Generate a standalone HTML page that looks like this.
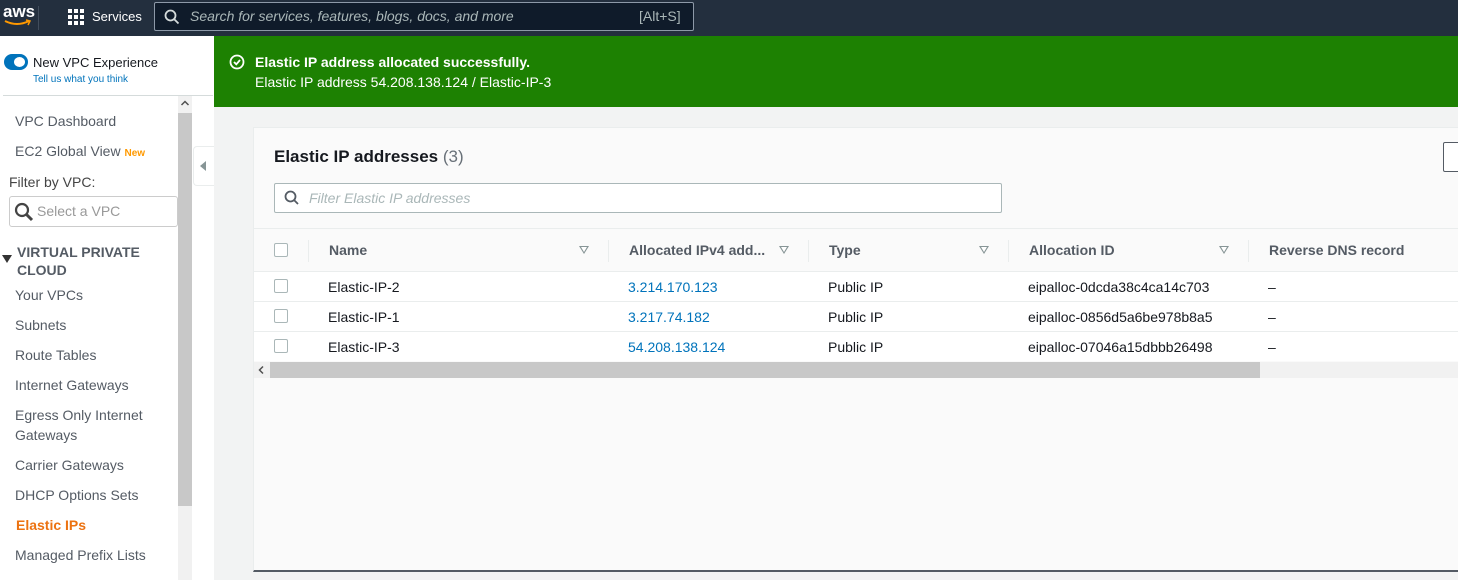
<!DOCTYPE html>
<html><head><style>
*{margin:0;padding:0;box-sizing:border-box}
body{width:1458px;height:580px;overflow:hidden;position:relative;background:#f2f3f3;font-family:"Liberation Sans",sans-serif;font-size:14px;color:#16191f}
.a{position:absolute;white-space:nowrap}
.nav{color:#545b64;font-size:14px}
.th{font-weight:bold;color:#545b64;font-size:14px}
.tri{position:absolute;width:0;height:0;border-left:5px solid transparent;border-right:5px solid transparent;border-top:8px solid #879596}
.tri:after{content:"";position:absolute;left:-3px;top:-7px;border-left:3px solid transparent;border-right:3px solid transparent;border-top:5px solid #fff}
.cb{position:absolute;width:14px;height:14px;border:1px solid #aab7b8;border-radius:2px;background:#fff}
.lnk{color:#0073bb}
</style></head><body>
<div class="a" style="left:0;top:0;width:1458px;height:36px;background:#232f3e"></div>
<div class="a" style="left:3px;top:2px;color:#fff;font-size:17px;font-weight:bold">aws</div>
<svg class="a" style="left:3px;top:19px" width="30" height="8"><path d="M2 2 Q14 8 26 2" stroke="#f90" stroke-width="2" fill="none"/><path d="M23 1 L27 2 L25 6" stroke="#f90" stroke-width="1.5" fill="none"/></svg>
<div class="a" style="left:38px;top:6px;width:1px;height:24px;background:#414d5c"></div>
<svg class="a" style="left:68px;top:9px" width="16" height="16" fill="#fff"><rect x="0" y="0" width="4" height="4"/><rect x="6" y="0" width="4" height="4"/><rect x="12" y="0" width="4" height="4"/><rect x="0" y="6" width="4" height="4"/><rect x="6" y="6" width="4" height="4"/><rect x="12" y="6" width="4" height="4"/><rect x="0" y="12" width="4" height="4"/><rect x="6" y="12" width="4" height="4"/><rect x="12" y="12" width="4" height="4"/></svg>
<div class="a" style="left:92px;top:9px;color:#fff;font-size:13px">Services</div>
<div class="a" style="left:154px;top:2px;width:540px;height:29px;border:1px solid #8d99a8;border-radius:2px;background:#0f1b2a"></div>
<svg class="a" style="left:164px;top:9px" width="16" height="16"><circle cx="6.5" cy="6.5" r="5" stroke="#d5dbdb" stroke-width="1.8" fill="none"/><path d="M10 10 L14.5 14.5" stroke="#d5dbdb" stroke-width="1.8"/></svg>
<div class="a" style="left:190px;top:8px;color:#aab7b8;font-size:14px;font-style:italic">Search for services, features, blogs, docs, and more</div>
<div class="a" style="left:639px;top:8px;color:#aab7b8;font-size:14px">[Alt+S]</div>
<div class="a" style="left:0;top:36px;width:214px;height:544px;background:#fff"></div>
<div class="a" style="left:4px;top:54px;width:24px;height:16px;border-radius:8px;background:#0073bb"></div>
<div class="a" style="left:14px;top:57px;width:11px;height:10px;border-radius:50%;background:#fff"></div>
<div class="a" style="left:33px;top:55px;font-size:13px;color:#16191f">New VPC Experience</div>
<div class="a" style="left:33px;top:74px;font-size:10px;color:#0073bb">Tell us what you think</div>
<div class="a" style="left:3px;top:95px;width:210px;height:1px;background:#d5dbdb"></div>
<div class="a" style="left:178px;top:96px;width:14px;height:484px;background:#f1f1f1"></div>
<div class="a" style="left:178px;top:113px;width:14px;height:393px;background:#c8c8c8"></div>
<svg class="a" style="left:180px;top:99px" width="10" height="8"><path d="M1.5 6 L5 2.5 L8.5 6" stroke="#505050" stroke-width="1.5" fill="none"/></svg>
<div class="a nav" style="left:15px;top:113px">VPC Dashboard</div>
<div class="a nav" style="left:15px;top:143px">EC2 Global View <span style="color:#ff9900;font-size:10px;font-weight:bold">New</span></div>
<div class="a" style="left:9px;top:174px;font-size:14px;color:#444">Filter by VPC:</div>
<div class="a" style="left:9px;top:196px;width:169px;height:31px;border:1px solid #ccc;border-radius:3px;background:#fff"></div>
<svg class="a" style="left:14px;top:202px" width="20" height="20"><circle cx="8" cy="8" r="6" stroke="#444" stroke-width="2.2" fill="none"/><path d="M12.5 12.5 L18 18" stroke="#444" stroke-width="3"/></svg>
<div class="a" style="left:37px;top:203px;font-size:14px;color:#999">Select a VPC</div>
<div class="a" style="left:2px;top:255px;width:0;height:0;border-left:5px solid transparent;border-right:5px solid transparent;border-top:8px solid #333"></div>
<div class="a" style="left:17px;top:243px;font-size:14px;font-weight:bold;color:#545b64;line-height:18px;white-space:normal;width:150px">VIRTUAL PRIVATE CLOUD</div>
<div class="a nav" style="left:15px;top:287px">Your VPCs</div>
<div class="a nav" style="left:15px;top:317px">Subnets</div>
<div class="a nav" style="left:15px;top:347px">Route Tables</div>
<div class="a nav" style="left:15px;top:377px">Internet Gateways</div>
<div class="a nav" style="left:15px;top:407px">Egress Only Internet</div>
<div class="a nav" style="left:15px;top:427px">Gateways</div>
<div class="a nav" style="left:15px;top:457px">Carrier Gateways</div>
<div class="a nav" style="left:15px;top:487px">DHCP Options Sets</div>
<div class="a" style="left:16px;top:517px;font-weight:bold;color:#ec7211">Elastic IPs</div>
<div class="a nav" style="left:15px;top:547px">Managed Prefix Lists</div>
<div class="a" style="left:193px;top:146px;width:21px;height:40px;background:#fff;border:1px solid #eaeded;border-right:none;border-radius:4px 0 0 4px"></div>
<div class="a" style="left:200px;top:161px;border-top:5px solid transparent;border-bottom:5px solid transparent;border-right:6px solid #879596"></div>
<div class="a" style="left:214px;top:36px;width:1244px;height:71px;background:#1d8102"></div>
<svg class="a" style="left:229px;top:54px" width="16" height="16"><circle cx="8" cy="8" r="6.5" stroke="#fff" stroke-width="1.8" fill="none"/><path d="M5 8 L7.3 10.3 L11 6" stroke="#fff" stroke-width="1.8" fill="none"/></svg>
<div class="a" style="left:255px;top:54px;color:#fff;font-weight:bold">Elastic IP address allocated successfully.</div>
<div class="a" style="left:255px;top:74px;color:#fff">Elastic IP address 54.208.138.124 / Elastic-IP-3</div>
<div class="a" style="left:253px;top:127px;width:1210px;height:445px;background:#fafafa;border:1px solid #eaeded;border-bottom:2px solid #545b64"></div>
<div class="a" style="left:274px;top:147px;font-size:17px;font-weight:bold;color:#16191f">Elastic IP addresses <span style="font-weight:normal;color:#687078">(3)</span></div>
<div class="a" style="left:1443px;top:142px;width:20px;height:30px;border:1px solid #545b64;border-radius:2px;background:#fff"></div>
<div class="a" style="left:274px;top:183px;width:728px;height:30px;border:1px solid #aab7b8;border-radius:2px;background:#fff"></div>
<svg class="a" style="left:284px;top:190px" width="16" height="16"><circle cx="6.5" cy="6.5" r="5" stroke="#545b64" stroke-width="1.8" fill="none"/><path d="M10 10 L14 14" stroke="#545b64" stroke-width="1.8"/></svg>
<div class="a" style="left:309px;top:190px;font-size:14px;font-style:italic;color:#aab7b8">Filter Elastic IP addresses</div>
<div class="a" style="left:254px;top:228px;width:1204px;height:1px;background:#eaeded"></div>
<div class="cb" style="left:274px;top:243px"></div>
<div class="a" style="left:308px;top:240px;width:1px;height:22px;background:#eaeded"></div>
<div class="a" style="left:608px;top:240px;width:1px;height:22px;background:#eaeded"></div>
<div class="a" style="left:808px;top:240px;width:1px;height:22px;background:#eaeded"></div>
<div class="a" style="left:1008px;top:240px;width:1px;height:22px;background:#eaeded"></div>
<div class="a" style="left:1248px;top:240px;width:1px;height:22px;background:#eaeded"></div>
<div class="a th" style="left:329px;top:242px">Name</div>
<div class="tri" style="left:579px;top:246px"></div>
<div class="a th" style="left:629px;top:242px">Allocated IPv4 add...</div>
<div class="tri" style="left:779px;top:246px"></div>
<div class="a th" style="left:829px;top:242px">Type</div>
<div class="tri" style="left:979px;top:246px"></div>
<div class="a th" style="left:1029px;top:242px">Allocation ID</div>
<div class="tri" style="left:1219px;top:246px"></div>
<div class="a th" style="left:1269px;top:242px">Reverse DNS record</div>
<div class="a" style="left:254px;top:271px;width:1204px;height:90px;background:#fff;border-top:1px solid #eaeded"></div>
<div class="a" style="left:254px;top:301px;width:1204px;height:1px;background:#eaeded"></div>
<div class="a" style="left:254px;top:331px;width:1204px;height:1px;background:#eaeded"></div>
<div class="cb" style="left:274px;top:279px"></div>
<div class="cb" style="left:274px;top:309px"></div>
<div class="cb" style="left:274px;top:339px"></div>
<div class="a" style="left:328px;top:279px">Elastic-IP-2</div>
<div class="a lnk" style="left:628px;top:279px">3.214.170.123</div>
<div class="a" style="left:828px;top:279px">Public IP</div>
<div class="a" style="left:1028px;top:279px">eipalloc-0dcda38c4ca14c703</div>
<div class="a" style="left:1268px;top:279px">–</div>
<div class="a" style="left:328px;top:309px">Elastic-IP-1</div>
<div class="a lnk" style="left:628px;top:309px">3.217.74.182</div>
<div class="a" style="left:828px;top:309px">Public IP</div>
<div class="a" style="left:1028px;top:309px">eipalloc-0856d5a6be978b8a5</div>
<div class="a" style="left:1268px;top:309px">–</div>
<div class="a" style="left:328px;top:339px">Elastic-IP-3</div>
<div class="a lnk" style="left:628px;top:339px">54.208.138.124</div>
<div class="a" style="left:828px;top:339px">Public IP</div>
<div class="a" style="left:1028px;top:339px">eipalloc-07046a15dbbb26498</div>
<div class="a" style="left:1268px;top:339px">–</div>
<div class="a" style="left:254px;top:362px;width:1204px;height:16px;background:#f1f1f1"></div>
<div class="a" style="left:270px;top:362px;width:990px;height:16px;background:#c8c8c8"></div>
<svg class="a" style="left:257px;top:365px" width="8" height="10"><path d="M6 1.5 L2.5 5 L6 8.5" stroke="#505050" stroke-width="1.5" fill="none"/></svg>
</body></html>
